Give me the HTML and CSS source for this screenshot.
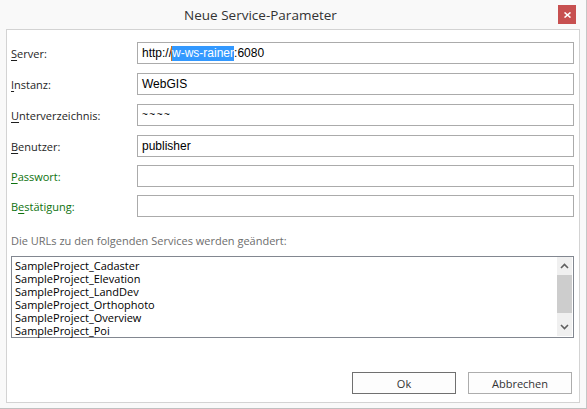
FILE: index.html
```html
<!DOCTYPE html>
<html lang="de">
<head>
<meta charset="utf-8">
<title>Neue Service-Parameter</title>
<link rel="stylesheet" href="styles.css">
</head>
<body>
<div class="window">
  <div class="titlebar">
    <div class="title">Neue Service-Parameter</div>
    <div class="close"><svg width="7" height="6" viewBox="0 0 7 6"><path d="M0.5 0.5 L6.5 5.5 M6.5 0.5 L0.5 5.5" stroke="#fff" stroke-width="1.6" fill="none"/></svg></div>
  </div>
  <div class="client">
    <div class="form">
      <label class="lbl"><u>S</u>erver:</label>
      <div class="field"><span>http://</span><span class="sel">w-ws-rainer</span><span>:6080</span></div>
      <label class="lbl"><u>I</u>nstanz:</label>
      <div class="field">WebGIS</div>
      <label class="lbl"><u>U</u>nterverzeichnis:</label>
      <div class="field tilde">~~~~</div>
      <label class="lbl"><u>B</u>enutzer:</label>
      <div class="field">publisher</div>
      <label class="lbl green"><u>P</u>asswort:</label>
      <div class="field"></div>
      <label class="lbl green">B<u>e</u>stätigung:</label>
      <div class="field"></div>
    </div>
    <p class="desc">Die URLs zu den folgenden Services werden geändert:</p>
    <div class="listbox">
      <ul class="items">
        <li>SampleProject_Cadaster</li>
        <li>SampleProject_Elevation</li>
        <li>SampleProject_LandDev</li>
        <li>SampleProject_Orthophoto</li>
        <li>SampleProject_Overview</li>
        <li>SampleProject_Poi</li>
      </ul>
      <div class="scrollbar">
        <div class="arrow"><svg width="9" height="6" viewBox="0 0 9 6"><path d="M1 5 L4.5 1.5 L8 5" stroke="#606060" stroke-width="1.6" fill="none"/></svg></div>
        <div class="thumb"></div>
        <div class="track"></div>
        <div class="arrow"><svg width="9" height="6" viewBox="0 0 9 6"><path d="M1 1 L4.5 4.5 L8 1" stroke="#606060" stroke-width="1.6" fill="none"/></svg></div>
      </div>
    </div>
    <div class="buttons">
      <button class="btn default">Ok</button>
      <button class="btn">Abbrechen</button>
    </div>
  </div>
</div>
</body>
</html>
```
FILE: styles.css
```css
* { box-sizing: border-box; }
html, body { margin: 0; padding: 0; }
body {
  background: #f9f9f9;
  font-family: "Open Sans", "Noto Sans", sans-serif;
  font-size: 11px;
  color: #1e1e1e;
}
.window {
  width: 587px;
  height: 409px;
  background: #f9f9f9;
  border-right: 1px solid #c6c6c6;
  border-bottom: 1px solid #c0c0c0;
}
.titlebar {
  height: 29px;
  display: flex;
  align-items: flex-start;
}
.title {
  flex: 1;
  text-align: center;
  font-size: 13.5px;
  line-height: 20px;
  padding-top: 5px;
  color: #333;
}
.close {
  width: 18px;
  height: 19px;
  margin-top: 5px;
  margin-left: 37px;
  margin-right: 10px;
  background: #c75050;
  display: flex;
  align-items: center;
  justify-content: center;
}
.client {
  margin-left: 6px;
  width: 574px;
  height: 374px;
  background: #fff;
  border: 1px solid #d3d3d3;
  padding: 12px 5px 0 4px;
}
.form {
  display: grid;
  grid-template-columns: 126px 1fr;
  grid-template-rows: 31px 31px 31px 30px 30px 22px;
}
.lbl {
  height: 22px;
  display: flex;
  align-items: center;
  white-space: pre;
}
.lbl u { text-decoration: underline; text-underline-offset: 2px; }
.green { color: #0e720e; }
.field {
  height: 22px;
  border: 1px solid #ababab;
  padding: 0 0 0 4px;
  font-family: "Liberation Sans", Arial, sans-serif;
  font-size: 12px;
  color: #000;
  display: flex;
  align-items: center;
  white-space: pre;
}
.sel {
  background: #3399ff;
  color: #fff;
  line-height: 15px;
  box-shadow: -1px 0 0 #c8711f;
}
.tilde { font-size: 10px; letter-spacing: 1.5px; padding-bottom: 2px; }
.desc {
  margin: 16px 0 0 0;
  line-height: 16px;
  color: #6d6d6d;
}
.listbox {
  margin-top: 7px;
  height: 82px;
  border: 1px solid #828790;
  display: flex;
}
.items {
  flex: 1;
  list-style: none;
  margin: 0;
  padding: 2px 0 0 3px;
  line-height: 13px;
  color: #000;
}
.items li { height: 13px; }
.scrollbar {
  width: 15px;
  margin: 0 1px 1px 0;
  background: #f0f0f0;
  display: flex;
  flex-direction: column;
}
.arrow {
  height: 18px;
  display: flex;
  align-items: center;
  justify-content: center;
}
.thumb { height: 38px; background: #cdcdcd; }
.track { flex: 1; }
.buttons {
  margin-top: 34px;
  margin-right: 2px;
  display: flex;
  justify-content: flex-end;
  gap: 12px;
}
.btn {
  width: 104px;
  height: 22px;
  background: #fdfdfd;
  border: 1px solid #adadad;
  font-family: "Open Sans", "Noto Sans", sans-serif;
  font-size: 11px;
  color: #333;
  padding: 0;
}
.btn.default { border-color: #707070; }
```
